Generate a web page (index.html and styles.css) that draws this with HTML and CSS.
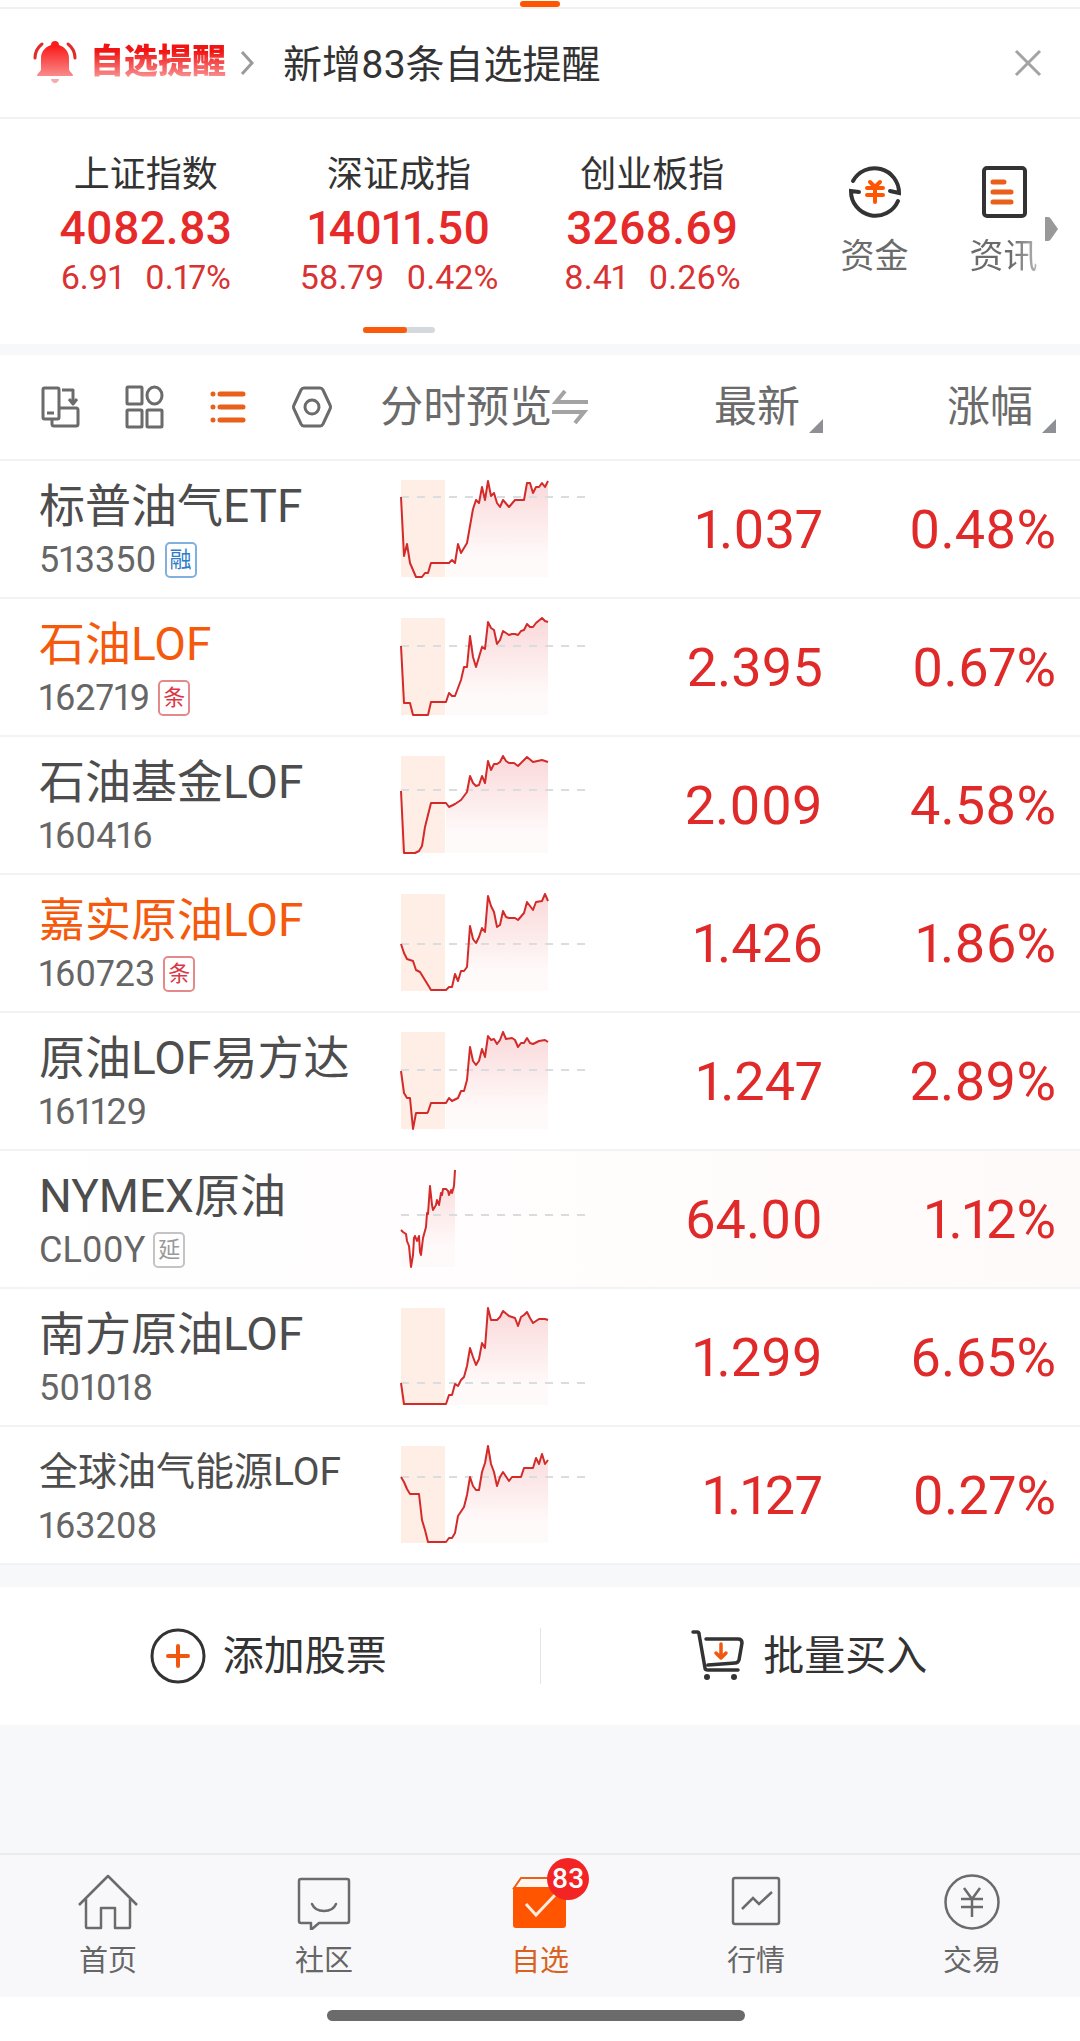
FILE: index.html
```html
<!DOCTYPE html>
<html lang="zh-CN">
<head>
<meta charset="utf-8">
<meta name="viewport" content="width=device-width, initial-scale=1">
<title>自选</title>
<link rel="stylesheet" href="styles.css">
</head>
<body>
<svg class="defs" aria-hidden="true">
  <defs>
    <linearGradient id="fade" x1="0" y1="0" x2="0" y2="97" gradientUnits="userSpaceOnUse">
      <stop offset="0" stop-color="#fad8d9"/><stop offset="0.8" stop-color="#fffafa"/>
    </linearGradient>
    <linearGradient id="bell" x1="0" y1="0" x2="0" y2="1">
      <stop offset="0.15" stop-color="#fb1c1c"/><stop offset="1" stop-color="#f98b8b"/>
    </linearGradient>
  </defs>
</svg>
<div class="page">
  <div class="tabstrip"><span class="tabstrip-mark"></span></div>

  <section class="alert">
    <a class="alert-link" href="#alerts">
      <svg class="alert-bell" width="44" height="44" viewBox="0 0 44 44">
        <path fill="url(#bell)" d="M22 0c2.500 0 4 1.500 4 4 6 2 10 7 10 13v11c0 3 4 4 4 7v0H4v0c0-3 4-4 4-7V17C8 11 12 6 18 4c0-2.500 1.500-4 4-4z"/>
        <path fill="#f9a9a9" d="M18 38h8c0 2-2 4-4 4s-4-2-4-4z"/>
        <path fill="none" stroke="#e22a2a" stroke-width="3" stroke-linecap="round" d="M9 3C4 7 2 11 2 17M35 3c5 4 7 8 7 14"/>
      </svg>
      <span class="alert-title">自选提醒</span>
      <svg class="alert-arrow" width="14" height="26" viewBox="0 0 14 26"><path fill="none" stroke="#9a9a9a" stroke-width="3" d="M2 2l10 11L2 24"/></svg>
      <span class="alert-text">新增83条自选提醒</span>
    </a>
    <button class="alert-close" type="button" aria-label="关闭">
      <svg width="28" height="28" viewBox="0 0 28 28"><path fill="none" stroke="#a3a3a3" stroke-width="3" d="M2 2l24 24M26 2L2 26"/></svg>
    </button>
  </section>

  <section class="market">
    <div class="indices">
      <a class="index" href="#sh"><span class="index-name">上证指数</span><span class="index-value">4082.83</span><span class="index-change"><span>6.91</span><span>0.17%</span></span></a>
      <a class="index" href="#sz"><span class="index-name">深证成指</span><span class="index-value">14011.50</span><span class="index-change"><span>58.79</span><span>0.42%</span></span></a>
      <a class="index" href="#cy"><span class="index-name">创业板指</span><span class="index-value">3268.69</span><span class="index-change"><span>8.41</span><span>0.26%</span></span></a>
      <span class="pager"><span class="pager-on"></span></span>
    </div>
    <div class="shortcuts">
      <a class="shortcut" href="#funds">
        <svg width="56" height="56" viewBox="0 0 56 56">
          <path fill="none" stroke="#333" stroke-width="4" stroke-linecap="round" d="M6 17A24.500 24.500 0 0 1 52 29l-9-2M51 37A24.500 24.500 0 0 1 4 27l8 1"/>
          <path fill="none" stroke="#ff5500" stroke-width="4" stroke-linecap="round" d="M23 18l5 5 5-5M20 24h16M20 31h16M28 24v14"/>
        </svg>
        <span>资金</span>
      </a>
      <a class="shortcut" href="#news">
        <svg width="56" height="56" viewBox="0 0 56 56">
          <rect x="8" y="4" width="41" height="48" rx="3" fill="none" stroke="#333" stroke-width="4"/>
          <path fill="none" stroke="#e8601a" stroke-width="5" stroke-linecap="round" d="M17 18h11M17 28h18M17 38h18"/>
        </svg>
        <span class="fading">资讯</span>
      </a>
      <svg class="more" width="14" height="24" viewBox="0 0 14 24"><path fill="#999" d="M0 0h3q2 0 3 2l7 10-7 10q-1 2-3 2H0z"/></svg>
    </div>
  </section>

  <table class="quotes">
    <colgroup><col class="col-name"><col class="col-chart"><col class="col-price"><col class="col-change"></colgroup>
    <thead>
      <tr>
        <th>
          <div class="tools">
            <button type="button" aria-label="横屏"><svg width="40" height="44" viewBox="0 0 40 44"><g fill="none" stroke="#6b6b6b" stroke-width="3" stroke-linejoin="round"><rect x="3" y="3" width="16" height="31" rx="1.500"/><path d="M7 28h7M22 5h11v14M29 14l4 5 4-5M20 23h16q2 0 2 2v14q0 2-2 2H14q-2 0-2-2v-5"/></g></svg></button>
            <button type="button" aria-label="宫格"><svg width="40" height="44" viewBox="0 0 40 44"><g fill="none" stroke="#6b6b6b" stroke-width="3"><rect x="3" y="2" width="15" height="17" rx="1"/><rect x="3" y="25" width="15" height="17" rx="1"/><rect x="23" y="25" width="15" height="17" rx="1"/><ellipse cx="30.500" cy="10.500" rx="7.500" ry="8.500"/></g></svg></button>
            <button type="button" aria-label="列表"><svg width="40" height="44" viewBox="0 0 40 44"><path fill="none" stroke="#e8601a" stroke-width="5" stroke-linecap="round" d="M5 9h0M12 9h23M5 22h0M12 22h23M5 35h0M12 35h23"/></svg></button>
            <button type="button" aria-label="设置"><svg width="40" height="44" viewBox="0 0 40 44"><g fill="none" stroke="#6b6b6b" stroke-width="3" stroke-linejoin="round"><path d="M12 3h16q2 0 3 2l7 15q1 2 0 4l-7 15q-1 2-3 2H12q-2 0-3-2L2 24q-1-2 0-4L9 5q1-2 3-2z"/><circle cx="20" cy="22" r="7"/></g></svg></button>
          </div>
        </th>
        <th>
          <button class="preview" type="button">分时预览<svg width="38" height="36" viewBox="0 0 38 36"><path fill="none" stroke="#a3a3a3" stroke-width="4" d="M36 13H4L13 2M0 23h32L23 34"/></svg></button>
        </th>
        <th><button class="sort" type="button">最新<svg width="14" height="14" viewBox="0 0 14 14"><path fill="#8f8f96" d="M14 0v14H0z"/></svg></button></th>
        <th><button class="sort" type="button">涨幅<svg width="14" height="14" viewBox="0 0 14 14"><path fill="#8f8f96" d="M14 0v14H0z"/></svg></button></th>
      </tr>
    </thead>
    <tbody>
      <tr>
        <td><span class="name">标普油气ETF</span><span class="code">513350<span class="tag tag-blue">融</span></span></td>
        <td><svg class="chart" width="188" height="100" viewBox="-1 -1 188 100"><rect class="pre" width="44" height="97"/><path class="area" d="M45 97V83L48 83 51 80 54 83 57 64 60 73 63 68 66 63 72 29 75 20 78 23 81 7 84 20 87 1 90 16 93 13 96 23 99 27 102 20 108 27 114 20 123 20 126 3 129 3 132 13 135 7 138 7 141 3 144 7 147 1V97z"/><path class="base" d="M0 17H185"/><path class="line" d="M0 17L3 76 6 64 9 83 15 97 21 97 24 93 27 93 30 83 48 83 51 80 54 83 57 64 60 73 63 68 66 63 72 29 75 20 78 23 81 7 84 20 87 1 90 16 93 13 96 23 99 27 102 20 108 27 114 20 123 20 126 3 129 3 132 13 135 7 138 7 141 3 144 7 147 1"/></svg></td>
        <td>1.037</td><td>0.48%</td>
      </tr>
      <tr>
        <td><span class="name hot">石油LOF</span><span class="code">162719<span class="tag tag-red">条</span></span></td>
        <td><svg class="chart" width="188" height="100" viewBox="-1 -1 188 100"><rect class="pre" width="44" height="97"/><path class="area" d="M45 97V84L48 75 51 78 54 78 60 62 63 49 66 49 69 18 72 39 75 49 81 29 84 31 87 4 90 10 93 12 96 26 99 22 102 13 108 17 111 16 114 16 117 17 120 13 123 12 126 6 129 9 132 9 135 5 141 0 144 3 147 4V97z"/><path class="base" d="M0 28H185"/><path class="line" d="M0 28L3 85 9 85 12 97 27 97 30 84 45 84 48 75 51 78 54 78 60 62 63 49 66 49 69 18 72 39 75 49 81 29 84 31 87 4 90 10 93 12 96 26 99 22 102 13 108 17 111 16 114 16 117 17 120 13 123 12 126 6 129 9 132 9 135 5 141 0 144 3 147 4"/></svg></td>
        <td>2.395</td><td>0.67%</td>
      </tr>
      <tr>
        <td><span class="name">石油基金LOF</span><span class="code">160416</span></td>
        <td><svg class="chart" width="188" height="100" viewBox="-1 -1 188 100"><rect class="pre" width="44" height="97"/><path class="area" d="M45 97V47L48 51 54 48 60 44 66 36 69 20 72 27 75 30 78 29 81 20 84 27 87 5 90 14 93 8 96 8 99 6 102 0 105 5 108 7 113 7 117 10 126 1 132 6 141 4 147 6V97z"/><path class="base" d="M0 34H185"/><path class="line" d="M0 35L3 97 14 97 18 95 21 90 24 71 30 47 45 47 48 51 54 48 60 44 66 36 69 20 72 27 75 30 78 29 81 20 84 27 87 5 90 14 93 8 96 8 99 6 102 0 105 5 108 7 113 7 117 10 126 1 132 6 141 4 147 6"/></svg></td>
        <td>2.009</td><td>4.58%</td>
      </tr>
      <tr>
        <td><span class="name hot">嘉实原油LOF</span><span class="code">160723<span class="tag tag-red">条</span></span></td>
        <td><svg class="chart" width="188" height="100" viewBox="-1 -1 188 100"><rect class="pre" width="44" height="97"/><path class="area" d="M45 97V96L48 93 51 93 54 80 57 87 60 77 63 77 66 73 69 32 72 45 75 49 78 43 81 34 84 38 87 2 90 12 93 18 96 33 99 31 102 17 105 23 108 24 114 24 117 26 123 19 126 8 132 16 135 8 141 7 144 0 147 7V97z"/><path class="base" d="M0 50H185"/><path class="line" d="M0 50L3 59 6 65 12 67 15 76 19 78 27 91 30 96 45 96 48 93 51 93 54 80 57 87 60 77 63 77 66 73 69 32 72 45 75 49 78 43 81 34 84 38 87 2 90 12 93 18 96 33 99 31 102 17 105 23 108 24 114 24 117 26 123 19 126 8 132 16 135 8 141 7 144 0 147 7"/></svg></td>
        <td>1.426</td><td>1.86%</td>
      </tr>
      <tr>
        <td><span class="name">原油LOF易方达</span><span class="code">161129</span></td>
        <td><svg class="chart" width="188" height="100" viewBox="-1 -1 188 100"><rect class="pre" width="44" height="97"/><path class="area" d="M45 97V71L48 66 51 69 57 66 60 59 63 59 66 48 69 15 72 29 75 33 78 29 81 17 84 25 87 4 90 8 93 7 96 12 99 8 102 0 105 7 111 6 114 8 117 15 120 11 123 11 126 6 129 11 132 12 138 9 144 8 147 10V97z"/><path class="base" d="M0 38H185"/><path class="line" d="M0 39L3 61 6 66 9 66 12 97 15 81 26 81 27 80 30 71 45 71 48 66 51 69 57 66 60 59 63 59 66 48 69 15 72 29 75 33 78 29 81 17 84 25 87 4 90 8 93 7 96 12 99 8 102 0 105 7 111 6 114 8 117 15 120 11 123 11 126 6 129 11 132 12 138 9 144 8 147 10"/></svg></td>
        <td>1.247</td><td>2.89%</td>
      </tr>
      <tr class="flash">
        <td><span class="name">NYMEX原油</span><span class="code">CL00Y<span class="tag">延</span></span></td>
        <td><svg class="chart" width="188" height="100" viewBox="-1 -1 188 100"><path class="area" d="M0 97V60L5 64 8 76 10 97 13 68 18 66 20 85 22 68 25 57 29 16 32 40 38 35 40 23 42 19 48 25 53 16 54 0V97z"/><path class="base" d="M0 45H185"/><path class="line" d="M0 60L2 62 5 64 6 71 8 76 10 97 12 85 13 68 14 66 16 71 18 66 19 82 20 85 22 68 25 57 26 43 27 44 29 16 31 35 32 40 35 35 36 30 38 35 40 23 41 25 42 19 45 19 47 21 48 25 50 20 51 23 53 16 54 0"/></svg></td>
        <td>64.00</td><td>1.12%</td>
      </tr>
      <tr>
        <td><span class="name">南方原油LOF</span><span class="code">501018</span></td>
        <td><svg class="chart" width="188" height="100" viewBox="-1 -1 188 100"><rect class="pre" width="44" height="97"/><path class="area" d="M45 97V96L48 87 51 87 54 76 57 78 60 72 63 69 66 58 69 40 72 49 75 57 78 51 81 35 84 40 87 0 90 12 96 12 99 9 102 3 108 8 114 10 117 18 120 9 123 7 126 4 129 10 132 15 138 11 144 11 147 12V97z"/><path class="base" d="M0 75H185"/><path class="line" d="M0 75L3 96 45 96 48 87 51 87 54 76 57 78 60 72 63 69 66 58 69 40 72 49 75 57 78 51 81 35 84 40 87 0 90 12 96 12 99 9 102 3 108 8 114 10 117 18 120 9 123 7 126 4 129 10 132 15 138 11 144 11 147 12"/></svg></td>
        <td>1.299</td><td>6.65%</td>
      </tr>
      <tr>
        <td><span class="name name-long">全球油气能源LOF</span><span class="code">163208</span></td>
        <td><svg class="chart" width="188" height="100" viewBox="-1 -1 188 100"><rect class="pre" width="44" height="97"/><path class="area" d="M45 97V96L48 92 51 92 54 87 57 70 63 61 66 49 69 31 72 40 75 44 78 44 81 26 84 17 87 0 90 18 93 26 96 40 99 31 102 26 108 35 111 31 120 31 123 22 132 22 135 12 138 18 141 8 144 18 147 14V97z"/><path class="base" d="M0 31H185"/><path class="line" d="M0 31L3 36 6 43 9 48 18 48 21 74 24 84 27 96 45 96 48 92 51 92 54 87 57 70 63 61 66 49 69 31 72 40 75 44 78 44 81 26 84 17 87 0 90 18 93 26 96 40 99 31 102 26 108 35 111 31 120 31 123 22 132 22 135 12 138 18 141 8 144 18 147 14"/></svg></td>
        <td>1.127</td><td>0.27%</td>
      </tr>
    </tbody>
  </table>

  <div class="actions">
    <button type="button">
      <svg width="56" height="56" viewBox="0 0 56 56"><circle cx="28" cy="28" r="26" fill="none" stroke="#333" stroke-width="3"/><path fill="none" stroke="#f2570f" stroke-width="4" stroke-linecap="round" d="M28 18v20M18 28h20"/></svg>
      添加股票
    </button>
    <span class="actions-rule"></span>
    <button type="button">
      <svg width="56" height="56" viewBox="0 0 56 56"><g fill="none" stroke="#333" stroke-width="3.500" stroke-linecap="round" stroke-linejoin="round"><path d="M3 4h4q2 0 2 2l6 34q0 2 3 2h30M16 11h32q4 0 4 4l-3 17q-1 3-4 3l-27 2"/></g><circle cx="17" cy="49" r="3" fill="#333"/><circle cx="44" cy="49" r="3" fill="#333"/><path fill="none" stroke="#f2570f" stroke-width="3.500" stroke-linecap="round" stroke-linejoin="round" d="M31 16v14M26 25l5 5 5-5"/></svg>
      批量买入
    </button>
  </div>

  <div class="spacer"></div>

  <nav class="tabs">
    <a class="tab" href="#home">
      <svg width="60" height="56" viewBox="0 0 60 56"><path fill="none" stroke="#6b6b6b" stroke-width="2.500" stroke-linejoin="round" d="M1 31L30 2l29 29M8 25v28q0 1 1 1h14V34h14v20h14q1 0 1-1V25"/></svg>
      <span>首页</span>
    </a>
    <a class="tab" href="#community">
      <svg width="60" height="56" viewBox="0 0 60 56"><g fill="none" stroke="#6b6b6b" stroke-width="2.500" stroke-linejoin="round"><path d="M7 5h46q2 0 2 2v40q0 2-2 2H25l-7 6q-1 1-1 0v-6H7q-2 0-2-2V7q0-2 2-2z"/><path stroke-linecap="round" d="M18 30q3 7 12 7t12-7"/></g></svg>
      <span>社区</span>
    </a>
    <a class="tab tab-on" href="#watchlist">
      <svg width="60" height="56" viewBox="0 0 60 56"><path fill="#fff6f0" stroke="#e8601a" stroke-width="2" d="M4 14l7-10h36l8 10z"/><path fill="#ff5500" d="M5 13h48q3 0 3 3v35q0 3-3 3H6q-3 0-3-3V16q0-3 2-3z"/><path fill="none" stroke="#ffece0" stroke-width="3" d="M16 30l10 11 19-20"/></svg>
      <span>自选</span>
      <span class="badge">83</span>
    </a>
    <a class="tab" href="#market">
      <svg width="60" height="56" viewBox="0 0 60 56"><g fill="none" stroke="#6b6b6b" stroke-width="2.500"><rect x="7" y="4" width="46" height="46" rx="2"/><path d="M16 35l11-11 6 6 13-12"/></g></svg>
      <span>行情</span>
    </a>
    <a class="tab" href="#trade">
      <svg width="60" height="56" viewBox="0 0 60 56"><g fill="none" stroke="#6b6b6b" stroke-width="2.500"><circle cx="30" cy="28" r="26.500"/><path d="M22 14l8 11 8-11M19 25h22M19 33h22M30 24v19"/></g></svg>
      <span>交易</span>
    </a>
  </nav>
  <div class="homebar"><span></span></div>
</div>
</body>
</html>
```
FILE: styles.css
```css
* { box-sizing: border-box; }

body {
  margin: 0;
  background: #fff;
  color: #333;
  font-family: Roboto, "Noto Sans CJK SC", sans-serif;
  font-feature-settings: "pnum";
  font-size: 36px;
}

a { color: inherit; text-decoration: none; }

button {
  padding: 0;
  border: 0;
  background: none;
  color: inherit;
  font: inherit;
  font-feature-settings: inherit;
}

svg { display: block; flex: none; }

.defs { position: absolute; width: 0; height: 0; }

.page {
  display: flex;
  flex-direction: column;
  min-height: 100vh;
}

.tabstrip {
  display: flex;
  justify-content: center;
  height: 9px;
  padding-top: 1px;
  border-bottom: 2px solid #f0f0f1;
}

.tabstrip-mark {
  width: 40px;
  height: 6px;
  border-radius: 3px;
  background: #ff5500;
}

/* Alert bar */
.alert {
  display: flex;
  align-items: center;
  justify-content: space-between;
  height: 110px;
  padding: 0 38px 0 33px;
  border-bottom: 2px solid #f1f1f2;
}

.alert-link { display: flex; align-items: center; }

.alert-title {
  margin: 0 14px 4px 13px;
  background: linear-gradient(#f01414 30%, #f98b8b 80%);
  background-clip: text;
  -webkit-background-clip: text;
  color: transparent;
  font-size: 34px;
  font-weight: 900;
  line-height: 50px;
}

.alert-text {
  margin-left: 29px;
  padding-top: 3px;
  font-size: 39px;
  line-height: 54px;
}

/* Index strip */
.market {
  display: flex;
  justify-content: space-between;
  padding: 34px 12px 11px 19px;
  border-bottom: 11px solid #f6f8fa;
}

.indices {
  display: grid;
  flex: 0 1 760px;
  grid-template-columns: repeat(3, 1fr);
}

.index {
  display: flex;
  flex-direction: column;
  align-items: center;
}

.index-name { font-size: 36px; line-height: 44px; }

.index-value {
  color: #e62a2a;
  font-size: 46px;
  font-weight: 500;
  line-height: 62px;
}

.index-change {
  display: flex;
  gap: 22px;
  color: #d93232;
  font-size: 34px;
  line-height: 36px;
}

.pager {
  grid-column: 2;
  justify-self: center;
  width: 72px;
  height: 6px;
  margin-top: 32px;
  border-radius: 3px;
  background: #d5d8dc;
}

.pager-on {
  display: block;
  width: 44px;
  height: 6px;
  border-radius: 3px;
  background: #fa5a0a;
}

.shortcuts {
  position: relative;
  display: grid;
  flex: none;
  grid-template-columns: 129px 129px;
  padding-top: 11px;
}

.shortcut {
  display: flex;
  flex-direction: column;
  align-items: center;
  gap: 16px;
  color: #6b6b6b;
  font-size: 34px;
  line-height: 40px;
}

.fading {
  background: linear-gradient(90deg, #6b6b6b 60%, #b5b5b5);
  background-clip: text;
  -webkit-background-clip: text;
  color: transparent;
}

.more { position: absolute; top: 64px; right: 9px; }

/* Watchlist */
.quotes {
  width: 100%;
  border-collapse: collapse;
  table-layout: fixed;
}

.col-name { width: 35.2%; }
.col-chart { width: 20.3%; }
.col-price { width: 20.7%; }

.quotes th,
.quotes td {
  padding: 0;
  border-bottom: 2px solid #f2f3f4;
}

.quotes th {
  height: 105px;
  color: #6b6b6b;
  font-size: 43px;
  font-weight: 400;
  line-height: 60px;
}

.quotes td {
  height: 138px;
  color: #e02a2a;
  font-size: 54px;
  text-align: right;
}

.quotes td:first-child {
  padding: 6px 0 0 39px;
  text-align: left;
  white-space: nowrap;
}

.quotes tr > :last-child { padding-right: 24px; }

.flash { background: linear-gradient(90deg, #fff, #fffafa); }

.tools { display: flex; gap: 44px; padding-left: 40px; }

.preview { display: flex; align-items: center; }

.sort {
  display: flex;
  align-items: flex-end;
  gap: 9px;
  margin-left: auto;
}

.sort svg { margin-bottom: 4px; }

.name {
  display: block;
  color: #4d4d4d;
  font-size: 46px;
  line-height: 56px;
}

.name-long { font-size: 39px; }

.hot { color: #f55a0c; }

.code {
  display: flex;
  align-items: center;
  gap: 8px;
  color: #666;
  font-size: 36px;
  line-height: 52px;
}

.tag {
  padding: 0 3px;
  border: 2px solid #c4c4c4;
  border-radius: 5px;
  color: #999;
  font-size: 22px;
  line-height: 32px;
}

.tag-blue { border-color: #7fb0e0; color: #2d7cc9; }
.tag-red { border-color: #e58a8a; color: #dc3545; }

.chart { margin-left: 20px; }
.pre { fill: #ffeee6; }
.area { fill: url(#fade); }
.base { fill: none; stroke: #dadde0; stroke-width: 2; stroke-dasharray: 8 8; }
.line { fill: none; stroke: #d42a2a; stroke-width: 2; stroke-linejoin: round; }

/* Actions */
.actions {
  display: grid;
  grid-template-columns: 1fr 1px 1fr;
  align-items: center;
  height: 160px;
  border-top: 22px solid #f6f8fa;
}

.actions button {
  display: flex;
  align-items: center;
  justify-content: center;
  gap: 17px;
  padding-right: 3px;
  font-size: 41px;
  line-height: 60px;
}

.actions-rule { height: 56px; background: #e2e4e6; }

.spacer { flex: 1; background: #f6f8fa; }

/* Bottom tabs */
.tabs {
  display: grid;
  grid-template-columns: repeat(5, 1fr);
  padding: 19px 0 18px;
  border-top: 2px solid #e9ebee;
  background: #f8f8fa;
}

.tab {
  position: relative;
  display: flex;
  flex-direction: column;
  align-items: center;
  gap: 13px;
  color: #666;
  font-size: 29px;
  line-height: 36px;
}

.tab-on { color: #d9621f; }

.badge {
  position: absolute;
  top: -16px;
  left: calc(50% + 7px);
  width: 42px;
  height: 42px;
  border-radius: 50%;
  background: #f22424;
  color: #fff;
  font-size: 28px;
  font-weight: 500;
  line-height: 42px;
  text-align: center;
}

.homebar {
  display: flex;
  justify-content: center;
  height: 44px;
  padding: 13px 8px 0 0;
}

.homebar span {
  width: 418px;
  height: 11px;
  border-radius: 6px;
  background: #6b6b6b;
}
```
